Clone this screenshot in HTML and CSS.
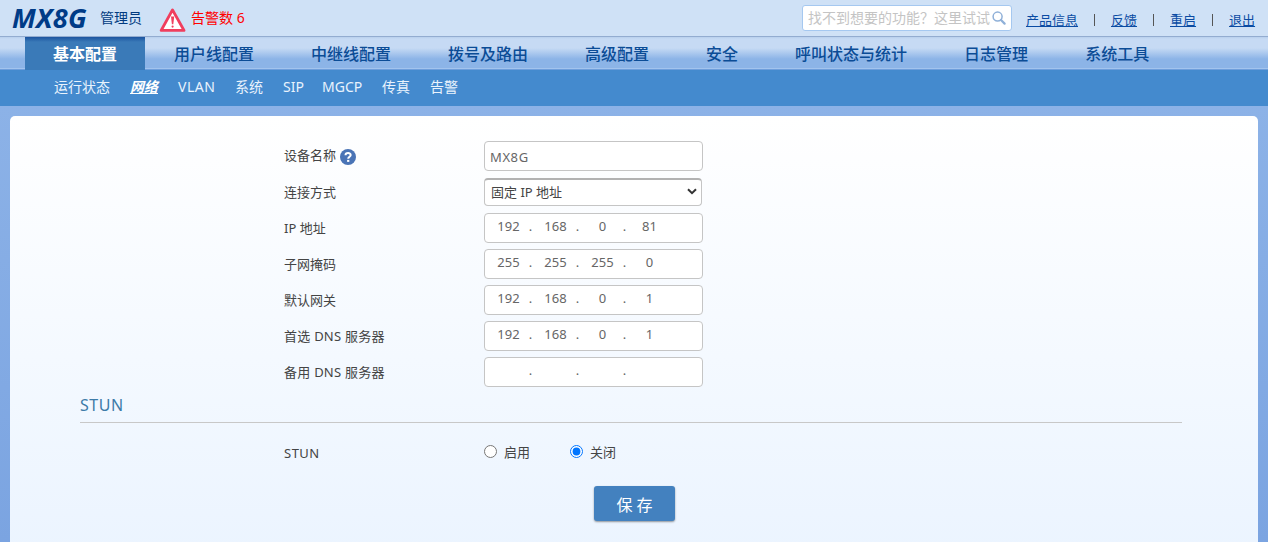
FILE: index.html
```
<!DOCTYPE html>
<html lang="zh-CN">
<head>
    <meta charset="UTF-8">
    <title>MX8G</title>
    <link rel="stylesheet" href="styles.css">
</head>
<body>
    <div class="header">
        <span class="logo">MX8G</span>
        <span class="user">管理员</span>
        <svg class="alarm-icon" width="28" height="26" viewBox="0 0 28 26">
            <path d="M13.5 2.9 L25 23.4 H2.2 Z" fill="#fff" stroke="#f03e5e" stroke-width="2.9" stroke-linejoin="round"/>
            <path d="M12 9.5 h3.2 l-.9 7.7 h-1.4 Z" fill="#f03e5e"/>
            <circle cx="13.6" cy="19.6" r="1.1" fill="#f03e5e"/>
        </svg>
        <a class="alarm">告警数 6</a>
        <div class="search">
            <input type="text" placeholder="找不到想要的功能？这里试试">
            <svg width="14" height="14" viewBox="0 0 14 14" fill="none" stroke="#8fb0d8">
                <circle cx="5.6" cy="5.6" r="4.5" stroke-width="1.5"/>
                <path d="M9 9 L12.6 12.6" stroke-width="2.2" stroke-linecap="round"/>
            </svg>
        </div>
        <div class="links">
            <a href="#">产品信息</a><i></i>
            <a href="#">反馈</a><i></i>
            <a href="#">重启</a><i></i>
            <a href="#">退出</a>
        </div>
    </div>

    <div class="nav">
        <a class="active">基本配置</a>
        <a>用户线配置</a>
        <a>中继线配置</a>
        <a>拨号及路由</a>
        <a>高级配置</a>
        <a>安全</a>
        <a>呼叫状态与统计</a>
        <a>日志管理</a>
        <a>系统工具</a>
    </div>
    <div class="subnav">
        <a>运行状态</a>
        <a class="current">网络</a>
        <a class="vlan">VLAN</a>
        <a>系统</a>
        <a class="sip">SIP</a>
        <a class="mgcp">MGCP</a>
        <a>传真</a>
        <a>告警</a>
    </div>

    <div class="panel">
        <form>
            <div class="row first">
                <label>设备名称
                    <svg class="help" width="16" height="16" viewBox="0 0 16 16">
                        <circle cx="8" cy="8" r="8" fill="#4a74b6"/>
                        <path d="M5.5 6.3 C5.5 3.4 10.7 3.4 10.7 6.1 C10.7 7.8 8.2 7.8 8.2 9.8" fill="none" stroke="#fff" stroke-width="2"/>
                        <rect x="7.1" y="10.9" width="2.2" height="2" fill="#fff"/>
                    </svg>
                </label>
                <input class="field name" type="text" value="MX8G">
            </div>
            <div class="row">
                <label>连接方式</label>
                <div class="select">固定 IP 地址
                    <svg width="10" height="7" viewBox="0 0 10 7"><path d="M1 1.2 L5 5.2 L9 1.2" fill="none" stroke="#333" stroke-width="2"/></svg>
                </div>
            </div>
            <div class="row">
                <label>IP 地址</label>
                <div class="field ip"><span>192</span><b>.</b><span>168</span><b>.</b><span>0</span><b>.</b><span>81</span></div>
            </div>
            <div class="row">
                <label>子网掩码</label>
                <div class="field ip"><span>255</span><b>.</b><span>255</span><b>.</b><span>255</span><b>.</b><span>0</span></div>
            </div>
            <div class="row">
                <label>默认网关</label>
                <div class="field ip"><span>192</span><b>.</b><span>168</span><b>.</b><span>0</span><b>.</b><span>1</span></div>
            </div>
            <div class="row">
                <label class="dns">首选 DNS 服务器</label>
                <div class="field ip"><span>192</span><b>.</b><span>168</span><b>.</b><span>0</span><b>.</b><span>1</span></div>
            </div>
            <div class="row">
                <label class="dns">备用 DNS 服务器</label>
                <div class="field ip"><span></span><b>.</b><span></span><b>.</b><span></span><b>.</b><span></span></div>
            </div>

            <h2>STUN</h2>
            <div class="row stun">
                <label>STUN</label>
                <div class="radios">
                    <input type="radio" name="stun" id="on"><label for="on">启用</label>
                    <input type="radio" name="stun" id="off" checked><label for="off">关闭</label>
                </div>
            </div>
            <button type="button">保 存</button>
        </form>
    </div>
</body>
</html>
```

FILE: styles.css
```
* {
    box-sizing: border-box;
}
body {
    margin: 0;
    height: 542px;
    overflow: hidden;
    font-family: "Noto Sans", "Noto Sans CJK SC", sans-serif;
    font-size: 13px;
    color: #444;
    background: linear-gradient(#8cb2e7 106px, #7ba4e1);
}
.header {
    display: flex;
    align-items: center;
    height: 36px;
    background: #cfe1f6;
    color: #003a80;
}
.logo {
    width: 88px;
    padding-left: 12px;
    font-size: 27px;
    font-weight: bold;
    font-style: italic;
    line-height: 34px;
    white-space: nowrap;
    letter-spacing: 0.3px;
    color: #003b87;
}
.user {
    width: 59px;
    margin: -2px 0 0 12px;
    font-size: 14px;
}
.alarm-icon {
    margin-top: 3px;
}
.alarm {
    margin: -2px 0 0 4px;
    font-size: 14px;
    color: #f00;
}
.search {
    display: flex;
    align-items: center;
    width: 210px;
    height: 26px;
    margin-left: auto;
    padding-left: 5px;
    border: 1px solid #a5c8f0;
    border-radius: 3px;
    background: #fff;
}
.search input {
    width: 184px;
    padding: 0 0 2px;
    border: 0;
    outline: 0;
    background: none;
    font-family: inherit;
    font-size: 14px;
}
.search input::placeholder {
    color: #c4c4c4;
}
.links {
    display: flex;
    align-items: center;
    width: 256px;
    padding: 3px 0 0 14px;
}
.links a {
    color: #0a4ba3;
    text-decoration: underline;
}
.links i {
    width: 1px;
    height: 12px;
    margin: 0 16px;
    background: #555;
}
.nav {
    display: flex;
    height: 34px;
    padding-left: 25px;
    border-top: 1px solid #93acd0;
    border-bottom: 1px solid #6f9fdc;
    background: linear-gradient(#b9cfec 0, #c6daf4 2px, #c6daf4 11px, #8cb4e7 22px, #8cb4e7 31px, #a3c4ee 31px);
}
.nav a {
    height: 33px;
    margin-right: 1px;
    padding: 0 28px;
    font-size: 16px;
    font-weight: 500;
    line-height: 34px;
    color: #0b4c96;
}
.nav a.active {
    background: linear-gradient(#1b539f, #3a7ab8 5px);
    font-weight: bold;
    color: #fff;
}
.subnav {
    display: flex;
    gap: 20px;
    height: 36px;
    padding-left: 54px;
    background: #448ace;
    font-size: 14px;
    line-height: 33px;
    color: #e9f3fd;
}
.subnav .current {
    font-weight: bold;
    font-style: italic;
    text-decoration: underline;
    color: #fff;
}
.subnav .vlan {
    width: 37px;
    letter-spacing: 0.5px;
}
.sip {
    width: 19px;
}
.mgcp {
    width: 40px;
}
.panel {
    height: 440px;
    margin: 10px 10px 0;
    padding: 22px 76px 0 70px;
    border-radius: 5px 5px 0 0;
    background: linear-gradient(#fff, #ebf4ff);
}
.row {
    display: flex;
    align-items: center;
    height: 36px;
    padding-left: 204px;
}
.row > label {
    display: flex;
    align-items: center;
    width: 200px;
    height: 20px;
    line-height: 20px;
}
.row > label.dns {
    letter-spacing: 0.25px;
}
.first > label {
    margin-top: -2px;
}
.help {
    margin: 3px 0 0 4px;
}
.field {
    width: 219px;
    height: 30px;
    padding: 2px 5px 0;
    border: 1px solid #c5c5c5;
    border-radius: 4px;
    background: #fff;
    font-family: inherit;
    font-size: 13px;
    color: #666;
}
.name {
    letter-spacing: 0.6px;
}
.select {
    display: flex;
    align-items: center;
    justify-content: space-between;
    width: 218px;
    height: 28px;
    padding: 0 4px 2px 6px;
    border: 1px solid #c5c5c5;
    border-top: 2px solid #b2b2b2;
    border-radius: 4px;
    background: #fff;
}
.ip {
    display: flex;
    padding: 0 6px;
    line-height: 25px;
}
.ip span {
    width: 35px;
    text-align: center;
}
.ip b {
    width: 9px;
    margin-right: 3px;
    font-weight: normal;
    text-align: center;
}
h2 {
    height: 33px;
    margin: 0;
    border-bottom: 1px solid #c8c8c8;
    font-size: 16px;
    font-weight: normal;
    line-height: 31px;
    letter-spacing: 0.5px;
    color: #3d7ba8;
}
.stun {
    margin-top: 12px;
}
.row.stun > label {
    letter-spacing: 0.5px;
}
.radios {
    display: flex;
    align-items: center;
    margin-top: -3px;
}
.radios input {
    width: 13px;
    height: 13px;
    margin: 0 7px 1px 0;
}
.radios label {
    margin-right: 40px;
}
button {
    display: block;
    width: 81px;
    height: 35px;
    margin: 15px 0 0 514px;
    padding: 0;
    border: 0;
    border-radius: 3px;
    background: #4381bf;
    box-shadow: 0 1px 2px rgba(0, 0, 0, 0.4);
    font-family: inherit;
    font-size: 16px;
    color: #fff;
}
```
